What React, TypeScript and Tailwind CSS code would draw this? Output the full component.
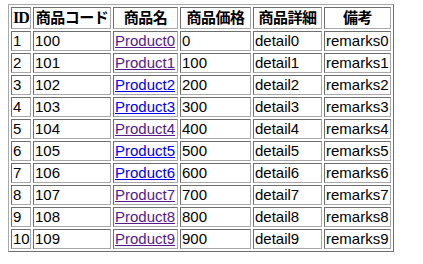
const rows = Array.from({ length: 10 }, (_, i) => ({
  id: i + 1,
  code: 100 + i,
  name: `Product${i}`,
  price: i * 100,
  detail: `detail${i}`,
  remarks: `remarks${i}`,
  visited: [0, 1, 4, 7, 8, 9].includes(i),
}));

const cell =
  "border border-t-[#6e6e6e] border-l-[#6e6e6e] border-b-[#a8a8a8] border-r-[#a8a8a8] p-[1px] overflow-hidden whitespace-nowrap";

export default function App() {
  return (
    <div className="bg-white w-[423px] h-[264px] pl-2 pt-1 font-['Liberation_Sans','Noto_Sans_CJK_JP',sans-serif] text-[15px] text-black">
      <table className="table-fixed border-separate border-spacing-[2px] border border-t-[#a8a8a8] border-l-[#a8a8a8] border-b-[#6e6e6e] border-r-[#6e6e6e] w-[386px]">
        <colgroup>
          <col className="w-[20px]" />
          <col className="w-[78px]" />
          <col className="w-[65px]" />
          <col className="w-[71px]" />
          <col className="w-[69px]" />
          <col className="w-[67px]" />
        </colgroup>
        <thead>
          <tr className="h-[22px]">
            <th className={`${cell} font-bold text-center leading-[18px] text-[16px] font-['Liberation_Serif',serif] tracking-[-1px]`}>
              ID
            </th>
            {["商品コード", "商品名", "商品価格", "商品詳細", "備考"].map((h) => (
              <th key={h} className={`${cell} font-bold text-center leading-[18px] tracking-[-0.5px]`}>
                {h}
              </th>
            ))}
          </tr>
        </thead>
        <tbody>
          {rows.map((r) => (
            <tr key={r.id} className="h-[20px]">
              <td className={`${cell} leading-[16px]`}>{r.id}</td>
              <td className={`${cell} leading-[16px]`}>{r.code}</td>
              <td className={`${cell} leading-[16px]`}>
                <a
                  href="#"
                  className={`underline ${r.visited ? "text-[#551a8b]" : "text-[#0000ee]"}`}
                >
                  {r.name}
                </a>
              </td>
              <td className={`${cell} leading-[16px]`}>{r.price}</td>
              <td className={`${cell} leading-[16px]`}>{r.detail}</td>
              <td className={`${cell} leading-[16px]`}>{r.remarks}</td>
            </tr>
          ))}
        </tbody>
      </table>
    </div>
  );
}
